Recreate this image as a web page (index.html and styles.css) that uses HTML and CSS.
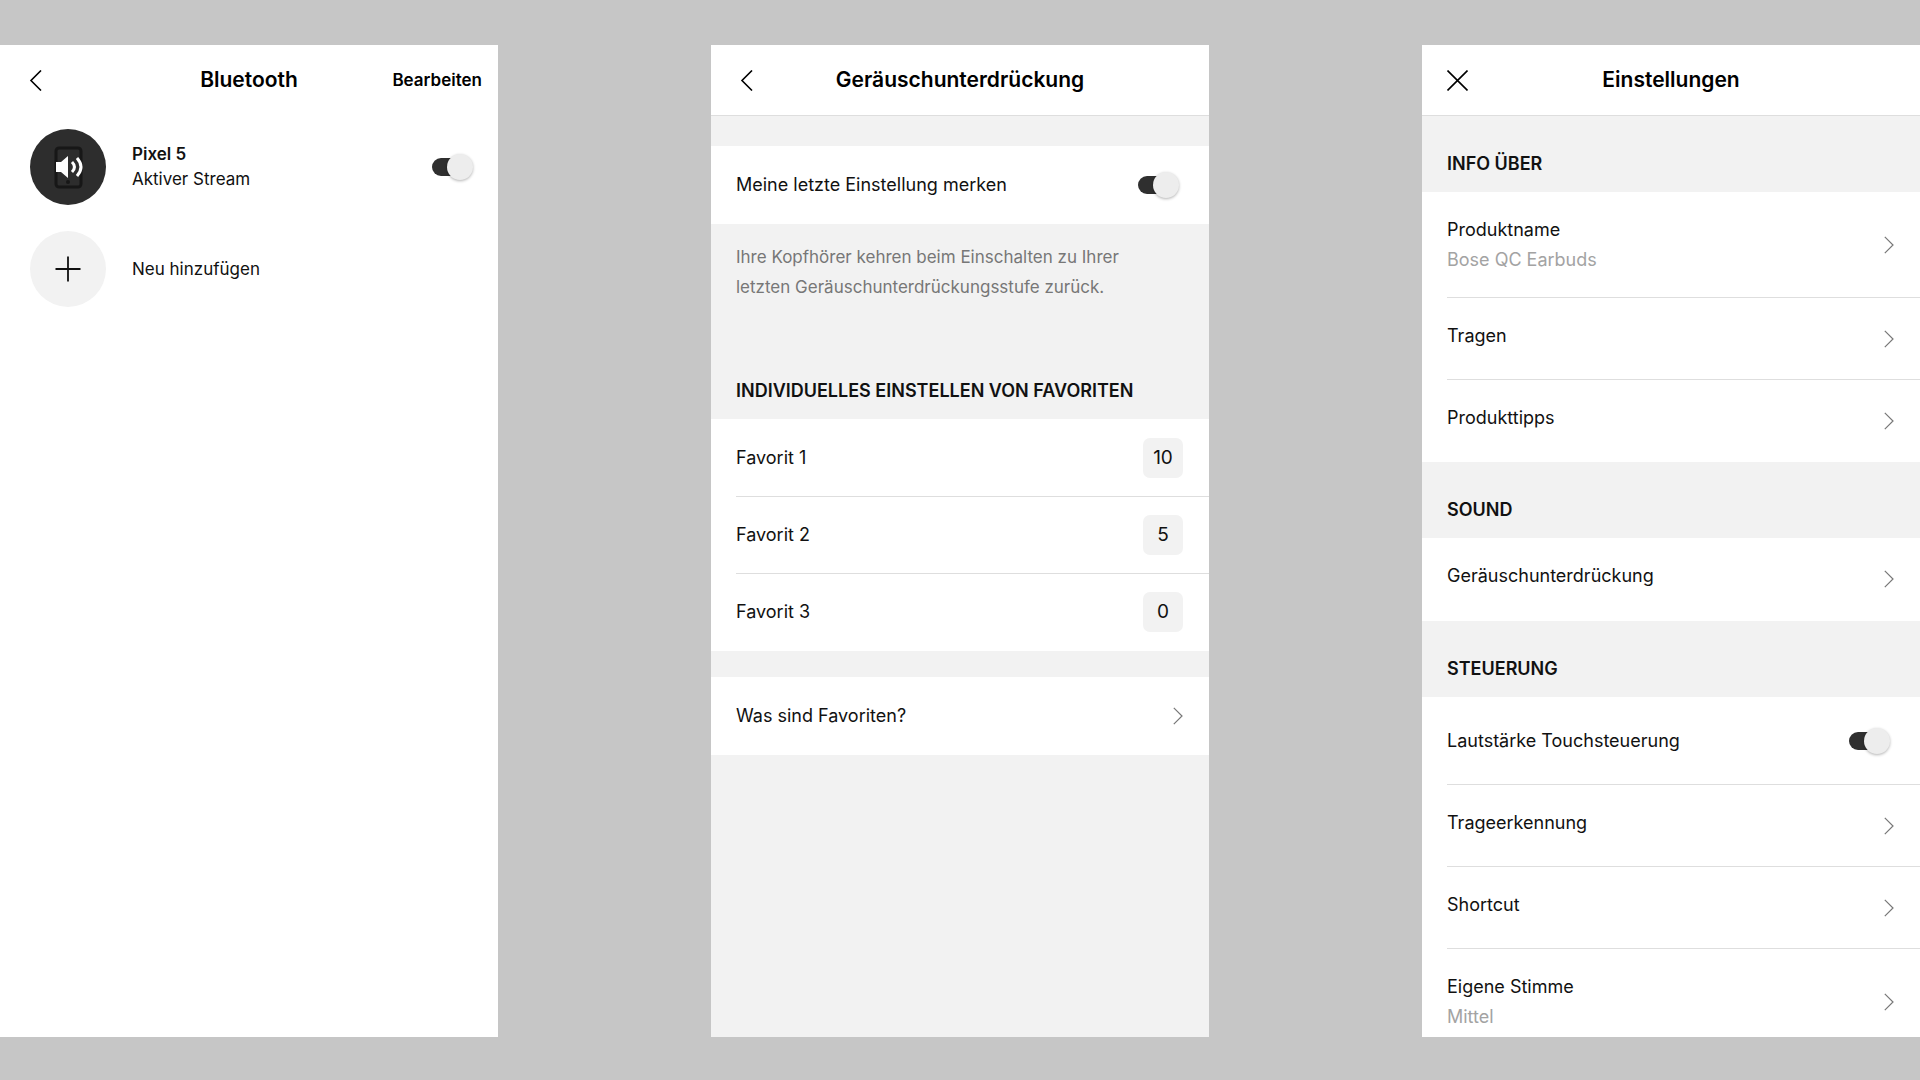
FILE: index.html
```
<!DOCTYPE html>
<html lang="de">
<head>
    <meta charset="UTF-8">
    <meta name="viewport" content="width=device-width, initial-scale=1.0">
    <title>Bose QC Earbuds</title>
    <link rel="stylesheet" href="styles.css">
</head>
<body>

    <!-- Shared icons -->
    <svg class="sprite" aria-hidden="true">
        <symbol id="back" viewBox="0 0 21 21"><path d="M16 0.5L6 10.5L16 20.5"/></symbol>
        <symbol id="close" viewBox="0 0 21 21"><path d="M0.5 0.5L20.5 20.5M20.5 0.5L0.5 20.5"/></symbol>
        <symbol id="next" viewBox="0 0 10 18"><path d="M0.8 0.8L9 9L0.8 17.2"/></symbol>
    </svg>

    <!-- Bluetooth -->
    <section class="screen">
        <header class="bar bar-plain">
            <button class="icon-button" aria-label="Zurück"><svg class="nav-icon"><use href="#back"/></svg></button>
            <h1>Bluetooth</h1>
            <button class="edit">Bearbeiten</button>
        </header>
        <ul class="devices">
            <li class="device">
                <span class="avatar avatar-dark">
                    <svg class="avatar-icon" viewBox="0 0 76 76" aria-hidden="true">
                        <rect x="26" y="19" width="25" height="39" rx="3" fill="none" stroke="#171717" stroke-width="3"/>
                        <circle cx="38" cy="53" r="2" fill="#171717"/>
                        <path d="M26 33h5l7-6v22l-7-6h-5z" fill="#fff"/>
                        <path d="M42 33q5 5 0 10M47 29q8 9 0 18" fill="none" stroke="#fff" stroke-width="3"/>
                    </svg>
                </span>
                <label class="device-text" for="pixel"><b>Pixel 5</b><span>Aktiver Stream</span></label>
                <input class="toggle" id="pixel" type="checkbox" checked>
            </li>
            <li>
                <button class="device">
                    <span class="avatar">
                        <svg class="avatar-icon" viewBox="0 0 76 76" aria-hidden="true">
                            <path d="M38 25.500v25M25.500 38h25" fill="none" stroke="#111" stroke-width="1.800"/>
                        </svg>
                    </span>
                    <span class="device-text">Neu hinzufügen</span>
                </button>
            </li>
        </ul>
    </section>

    <!-- Noise cancelling -->
    <section class="screen screen-grey">
        <header class="bar">
            <button class="icon-button" aria-label="Zurück"><svg class="nav-icon"><use href="#back"/></svg></button>
            <h1>Geräuschunterdrückung</h1>
        </header>
        <div class="list list-first">
            <div class="row row-short">
                <label for="remember">Meine letzte Einstellung merken</label>
                <input class="toggle" id="remember" type="checkbox" checked>
            </div>
        </div>
        <p class="note">Ihre Kopfhörer kehren beim Einschalten zu Ihrer letzten Geräuschunterdrückungsstufe zurück.</p>
        <h2>INDIVIDUELLES EINSTELLEN VON FAVORITEN</h2>
        <div class="list">
            <div class="row row-short"><span id="fav1">Favorit 1</span><button class="level" aria-describedby="fav1">10</button></div>
            <div class="row row-short"><span id="fav2">Favorit 2</span><button class="level" aria-describedby="fav2">5</button></div>
            <div class="row row-short"><span id="fav3">Favorit 3</span><button class="level" aria-describedby="fav3">0</button></div>
        </div>
        <div class="list list-spaced">
            <a class="row row-short" href="#"><span>Was sind Favoriten?</span><svg class="next"><use href="#next"/></svg></a>
        </div>
    </section>

    <!-- Settings -->
    <section class="screen screen-grey">
        <header class="bar">
            <button class="icon-button" aria-label="Schließen"><svg class="nav-icon"><use href="#close"/></svg></button>
            <h1>Einstellungen</h1>
        </header>
        <h2>INFO ÜBER</h2>
        <div class="list">
            <a class="row" href="#"><span class="row-text">Produktname<small>Bose QC Earbuds</small></span><svg class="next"><use href="#next"/></svg></a>
            <a class="row" href="#"><span class="row-text">Tragen</span><svg class="next"><use href="#next"/></svg></a>
            <a class="row" href="#"><span class="row-text">Produkttipps</span><svg class="next"><use href="#next"/></svg></a>
        </div>
        <h2>SOUND</h2>
        <div class="list">
            <a class="row" href="#"><span class="row-text">Geräuschunterdrückung</span><svg class="next"><use href="#next"/></svg></a>
        </div>
        <h2>STEUERUNG</h2>
        <div class="list">
            <div class="row row-tall">
                <label for="touch">Lautstärke Touchsteuerung</label>
                <input class="toggle" id="touch" type="checkbox" checked>
            </div>
            <a class="row" href="#"><span class="row-text">Trageerkennung</span><svg class="next"><use href="#next"/></svg></a>
            <a class="row" href="#"><span class="row-text">Shortcut</span><svg class="next"><use href="#next"/></svg></a>
            <a class="row" href="#"><span class="row-text">Eigene Stimme<small>Mittel</small></span><svg class="next"><use href="#next"/></svg></a>
        </div>
    </section>

</body>
</html>
```
FILE: styles.css
```
* {
    box-sizing: border-box;
}
body {
    margin: 0;
    height: 100vh;
    padding: 45px 0 43px;
    display: grid;
    grid-template-columns: repeat(3, minmax(0, 1fr));
    grid-template-rows: minmax(0, 1fr);
    gap: 213px;
    background: #c6c6c6;
    color: #111;
    font-family: Inter, "Open Sans", sans-serif;
    font-size: 18px;
    line-height: 30px;
}
button {
    padding: 0;
    border: 0;
    background: none;
    color: inherit;
    font: inherit;
    text-align: left;
    cursor: pointer;
}
a {
    color: inherit;
    text-decoration: none;
}
.sprite {
    display: none;
}

/* Screens */
.screen {
    overflow: hidden;
    background: #fff;
}
.screen-grey {
    background: #f2f2f2;
}
.bar {
    display: grid;
    grid-template-columns: 1fr auto 1fr;
    align-items: center;
    height: 71px;
    padding: 0 16px;
    background: #fff;
    border-bottom: 1px solid #dedede;
}
.bar-plain {
    border-color: #fff;
}
h1 {
    margin: 0;
    font-size: 21px;
    font-weight: 600;
    color: #000;
}
.icon-button {
    display: flex;
    justify-self: start;
    padding: 9px;
}
.nav-icon {
    width: 21px;
    height: 21px;
    fill: none;
    stroke: #000;
    stroke-width: 1.6;
}
.edit {
    justify-self: end;
    font-size: 17px;
    font-weight: 600;
    color: #000;
}

/* Bluetooth devices */
.devices {
    display: flex;
    flex-direction: column;
    gap: 26px;
    margin: 0;
    padding: 13px 25px 13px 30px;
    list-style: none;
}
.device {
    display: flex;
    align-items: center;
    gap: 26px;
    width: 100%;
}
.avatar {
    width: 76px;
    height: 76px;
    border-radius: 50%;
    background: #f2f2f2;
}
.avatar-dark {
    background: #2d2d2d;
}
.avatar-icon {
    display: block;
}
.device-text {
    display: flex;
    flex: 1;
    flex-direction: column;
    font-size: 17px;
    line-height: 25px;
}
.device-text b {
    font-weight: 600;
}

/* Lists */
.list {
    padding: 0 0 1px 25px;
    background: #fff;
}
.list-first {
    margin-top: 30px;
}
.list-spaced {
    margin-top: 26px;
}
.row {
    display: flex;
    align-items: center;
    justify-content: space-between;
    min-height: 82px;
    padding-right: 26px;
}
.row + .row {
    border-top: 1px solid #dedede;
}
.row-short {
    min-height: 77px;
}
.row-tall {
    min-height: 87px;
}
.row-text {
    align-self: flex-start;
    padding: 23px 0 22px;
}
.row-text small {
    display: block;
    font-size: 18px;
    color: #a3a3a3;
}
h2 {
    margin: 0;
    padding: 33px 25px 13px;
    font-size: 18px;
    font-weight: 600;
}
.note {
    margin: 0;
    padding: 18px 60px 41px 25px;
    font-size: 17px;
    color: #777;
}
.next {
    width: 10px;
    height: 18px;
    fill: none;
    stroke: #777;
    stroke-width: 1.2;
}
.level {
    width: 40px;
    height: 40px;
    border-radius: 7px;
    background: #f2f2f2;
    font-size: 19px;
    text-align: center;
}

/* Switch: dark track with a light thumb at its right end */
.toggle {
    appearance: none;
    display: flex;
    align-items: center;
    width: 41px;
    height: 26px;
    margin: 0;
    cursor: pointer;
}
.row .toggle {
    margin-right: 4px;
}
.toggle::before {
    content: "";
    width: 28px;
    height: 18px;
    border-radius: 9px;
    background: #2f2f2f;
}
.toggle::after {
    content: "";
    width: 26px;
    height: 26px;
    margin-left: -13px;
    border-radius: 50%;
    background: #ededed;
    box-shadow: 0 1px 3px rgba(0, 0, 0, 0.3);
}
```
